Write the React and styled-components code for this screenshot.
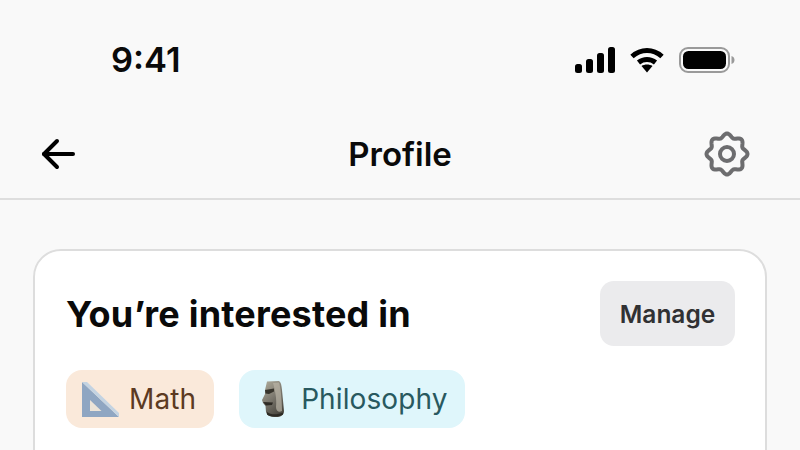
import React from 'react';
import styled, { createGlobalStyle } from 'styled-components';

const GlobalStyle = createGlobalStyle`
  html, body {
    margin: 0;
    padding: 0;
    background: #f9f9f9;
    overflow: hidden;
  }
  * {
    box-sizing: border-box;
  }
`;

const Page = styled.div`
  width: 800px;
  height: 450px;
  overflow: hidden;
  background: #f9f9f9;
  font-family: Inter, 'Liberation Sans', sans-serif;
  color: #0a0a0a;
`;

const StatusBar = styled.div`
  height: 110px;
  padding: 10px 65px 0 111px;
  display: flex;
  align-items: center;
  justify-content: space-between;
`;

const Time = styled.span`
  font-size: 34.5px;
  font-weight: 600;
  line-height: 40px;
`;

const StatusIcons = styled.div`
  display: flex;
  align-items: center;
  gap: 14px;
`;

const NavBar = styled.header`
  height: 90px;
  padding: 0 50px;
  display: grid;
  grid-template-columns: 1fr auto 1fr;
  align-items: center;
  border-bottom: 2px solid #dedede;
`;

const BackSlot = styled.div`
  display: flex;
  margin-left: -10px;
`;

const GearSlot = styled.div`
  display: flex;
  justify-content: flex-end;
`;

const Title = styled.h1`
  margin: 0;
  font-size: 33px;
  font-weight: 600;
  line-height: 40px;
`;

const Content = styled.main`
  padding: 49px 33px 0 33px;
`;

const Card = styled.section`
  height: 300px;
  padding: 30px 30px 0 31px;
  background: #fff;
  border: 2px solid #dddddd;
  border-radius: 28px;
`;

const CardHead = styled.div`
  display: flex;
  align-items: center;
  justify-content: space-between;
`;

const CardTitle = styled.h2`
  margin: 0;
  font-size: 36px;
  font-weight: 700;
  line-height: 40px;
  letter-spacing: 0.2px;
`;

const ManageButton = styled.button`
  width: 135px;
  height: 65px;
  border: 0;
  border-radius: 14px;
  background: #ebebed;
  color: #313133;
  font-family: inherit;
  font-size: 24.5px;
  font-weight: 600;
`;

const Chips = styled.div`
  margin-top: 24px;
  display: flex;
  gap: 25px;
`;

const Chip = styled.span`
  height: 58px;
  padding: 0 ${({ $right }) => $right}px 0 ${({ $left }) => $left}px;
  display: inline-flex;
  align-items: center;
  gap: ${({ $gap }) => $gap}px;
  border-radius: 16px;
  background: ${({ $bg }) => $bg};
  color: ${({ $fg }) => $fg};
  font-size: 28px;
  font-weight: 400;
  letter-spacing: 0.1px;
`;

const SignalIcon = () => (
  <svg width="40" height="26" viewBox="0 0 40 26">
    <rect x="0" y="17" width="7" height="9" rx="2.5" fill="#000" />
    <rect x="11" y="12" width="7" height="14" rx="2.5" fill="#000" />
    <rect x="22" y="6" width="7" height="20" rx="2.5" fill="#000" />
    <rect x="33" y="0" width="7" height="26" rx="2.5" fill="#000" />
  </svg>
);

const WifiIcon = () => (
  <svg width="36" height="26" viewBox="0 0 36 26">
    <path d="M3 9.5 C12 1.5 24 1.5 33 9.5" fill="none" stroke="#000" strokeWidth="5" />
    <path d="M9.5 15.5 C14.5 11.5 21.5 11.5 26.5 15.5" fill="none" stroke="#000" strokeWidth="5" />
    <path d="M12.5 19 C15.5 17 20.5 17 23.5 19 L18 25.5 Z" fill="#000" />
  </svg>
);

const BatteryIcon = () => (
  <svg width="56" height="26" viewBox="0 0 56 26">
    <rect x="1" y="1" width="49" height="24" rx="8" fill="none" stroke="#9a9a9a" strokeWidth="2" />
    <rect x="4" y="4" width="43" height="18" rx="5.5" fill="#000" />
    <path d="M52.5 9 C55 10 55.5 11.5 55.5 13 C55.5 14.5 55 16 52.5 17 Z" fill="#9a9a9a" />
  </svg>
);

const BackIcon = () => (
  <svg width="36" height="32" viewBox="0 0 36 32" fill="none" stroke="#000" strokeWidth="4" strokeLinecap="round" strokeLinejoin="round">
    <path d="M33 16 H4" />
    <path d="M17 3 L4 16 L17 29" />
  </svg>
);

// wavy outline with 8 soft lobes
const gearOutline = Array.from({ length: 96 }, (_, i) => {
  const angle = (i / 96) * Math.PI * 2;
  const r = 18.6 + 1.9 * Math.cos(8 * angle);
  return `${(23 + r * Math.sin(angle)).toFixed(2)} ${(23 - r * Math.cos(angle)).toFixed(2)}`;
}).join(' L');

const GearIcon = () => (
  <svg width="46" height="46" viewBox="0 0 46 46" fill="none" stroke="#6d6d6f" strokeWidth="4" strokeLinejoin="round">
    <path d={`M${gearOutline} Z`} />
    <circle cx="23" cy="23" r="7" />
  </svg>
);

const RulerEmoji = () => (
  <svg width="37" height="35" viewBox="0 0 37 35">
    <path d="M0 0 L37 35 L0 35 Z" fill="#8fa6c2" />
    <path d="M0 0 L5 0 L37 31 L37 35 Z" fill="#c3d3e2" />
    <path d="M8 18 L19.5 29 L8 29 Z" fill="#ece4d8" />
  </svg>
);

const MoaiEmoji = () => (
  <svg width="23" height="36" viewBox="0 0 23 36">
    <defs>
      <linearGradient id="moaiStone" x1="0" y1="0" x2="0.5" y2="1">
        <stop offset="0" stopColor="#b3af9e" />
        <stop offset="0.55" stopColor="#7d796f" />
        <stop offset="1" stopColor="#4d4a42" />
      </linearGradient>
    </defs>
    <path d="M5 0.5 L17 0 C19 1 19.5 4 20 9 L22 30 C22 34 19 36 14 36 C9 36 5 35 4 31 L3.5 25 L1 22 L0 19 L3 13 L3 9 Z" fill="url(#moaiStone)" />
    <path d="M11 2 L17 1.5 C18.5 6 20 18 20 30 C17 32 14 30 14 26 C15 18 13 9 11 2 Z" fill="#bab5a6" opacity="0.7" />
    <path d="M3 9 L12 7.5 L12 10.5 L7 13 L3.5 12.5 Z" fill="#37342c" />
    <path d="M1 21 L11 21.5 L10 24 L4 24.5 Z" fill="#2e2b25" />
    <path d="M5 31 C9 34 15 34 21 31.5 L21 33.5 C18 36 8 36.5 5 33.5 Z" fill="#2d2a24" />
  </svg>
);

const App = () => {
  return (
    <Page>
      <GlobalStyle />
      <StatusBar>
        <Time>9:41</Time>
        <StatusIcons>
          <SignalIcon />
          <WifiIcon />
          <BatteryIcon />
        </StatusIcons>
      </StatusBar>
      <NavBar>
        <BackSlot>
          <BackIcon />
        </BackSlot>
        <Title>Profile</Title>
        <GearSlot>
          <GearIcon />
        </GearSlot>
      </NavBar>
      <Content>
        <Card>
          <CardHead>
            <CardTitle>You’re interested in</CardTitle>
            <ManageButton>Manage</ManageButton>
          </CardHead>
          <Chips>
            <Chip $bg="#fae9da" $fg="#5c3a22" $gap={10} $left={16} $right={18}>
              <RulerEmoji />
              Math
            </Chip>
            <Chip $bg="#dff6fb" $fg="#28595f" $gap={16} $left={23} $right={17}>
              <MoaiEmoji />
              Philosophy
            </Chip>
          </Chips>
        </Card>
      </Content>
    </Page>
  );
};

export default App;
